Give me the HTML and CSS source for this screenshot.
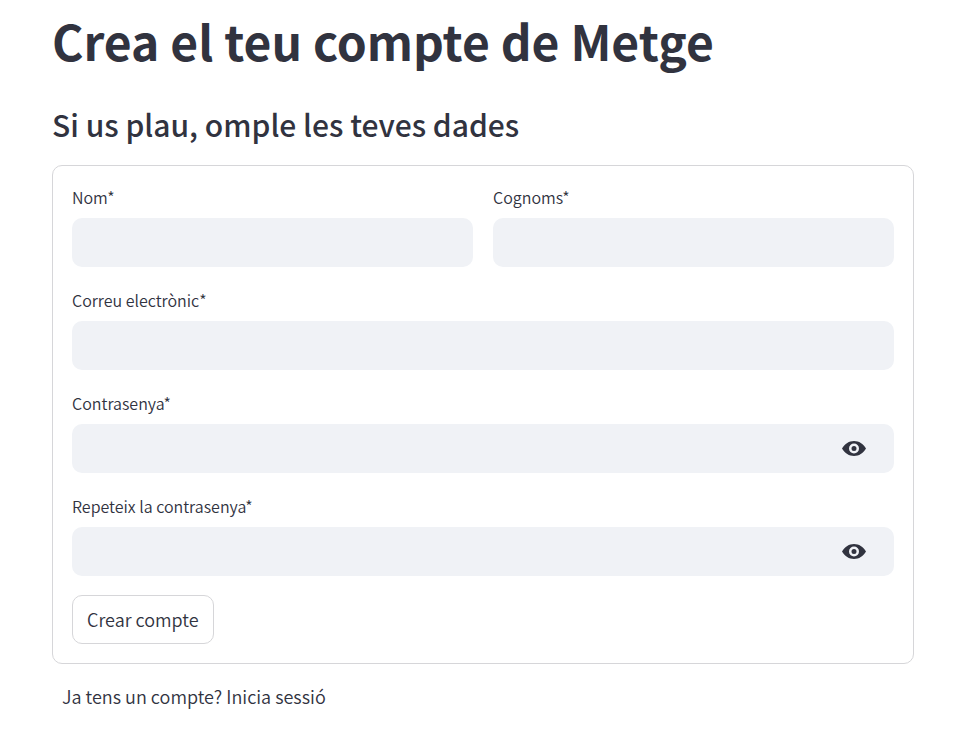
FILE: index.html
```html
<!DOCTYPE html>
<html lang="ca">
<head>
<meta charset="utf-8">
<meta name="viewport" content="width=device-width, initial-scale=1">
<title>Crea el teu compte de Metge</title>
<link rel="stylesheet" href="styles.css">
</head>
<body>
<main class="page">
  <h1 class="title">Crea el teu compte de Metge</h1>
  <h2 class="subtitle">Si us plau, omple les teves dades</h2>
  <form class="card">
    <div class="row">
      <div class="field">
        <label class="label" for="nom">Nom*</label>
        <div class="box"><input class="input" id="nom" type="text"></div>
      </div>
      <div class="field">
        <label class="label" for="cognoms">Cognoms*</label>
        <div class="box"><input class="input" id="cognoms" type="text"></div>
      </div>
    </div>
    <div class="field">
      <label class="label" for="correu">Correu electrònic*</label>
      <div class="box"><input class="input" id="correu" type="email"></div>
    </div>
    <div class="field">
      <label class="label" for="contrasenya">Contrasenya*</label>
      <div class="box">
        <input class="input" id="contrasenya" type="password">
        <button class="reveal" type="button" aria-label="Mostra la contrasenya">
          <svg class="eye" viewBox="0 0 24 15" aria-hidden="true"><path fill-rule="evenodd" d="M0 7.500C3 2.700 7 0 12 0s9 2.700 12 7.500C21 12.300 17 15 12 15S3 12.300 0 7.500zM12 2.500a5 5 0 1 0 0 10 5 5 0 0 0 0-10zM12 5a2.500 2.500 0 1 1 0 5 2.500 2.500 0 0 1 0-5z"/></svg>
        </button>
      </div>
    </div>
    <div class="field">
      <label class="label" for="repeteix">Repeteix la contrasenya*</label>
      <div class="box">
        <input class="input" id="repeteix" type="password">
        <button class="reveal" type="button" aria-label="Mostra la contrasenya">
          <svg class="eye" viewBox="0 0 24 15" aria-hidden="true"><path fill-rule="evenodd" d="M0 7.500C3 2.700 7 0 12 0s9 2.700 12 7.500C21 12.300 17 15 12 15S3 12.300 0 7.500zM12 2.500a5 5 0 1 0 0 10 5 5 0 0 0 0-10zM12 5a2.500 2.500 0 1 1 0 5 2.500 2.500 0 0 1 0-5z"/></svg>
        </button>
      </div>
    </div>
    <button class="submit" type="submit">Crear compte</button>
  </form>
  <a class="login" href="#">Ja tens un compte? Inicia sessió</a>
</main>
</body>
</html>
```
FILE: styles.css
```css
* {
  box-sizing: border-box;
}

body {
  margin: 0;
  background: #fff;
  color: #31333f;
  font-family: "Noto Sans CJK JP", "Noto Sans", sans-serif;
  font-size: 18px;
  font-weight: 350;
  line-height: 28px;
}

.page {
  padding: 8px 47px 20px 52px;
}

.title {
  margin: 0;
  font-size: 48px;
  font-weight: 700;
  line-height: 64px;
}

.subtitle {
  margin: 30px 0 19px;
  font-size: 30px;
  font-weight: 500;
  line-height: 44px;
}

.card {
  display: flex;
  flex-direction: column;
  gap: 19px;
  padding: 17px 19px 19px;
  border: 1px solid #d6d6d9;
  border-radius: 10px;
}

.row {
  display: grid;
  grid-template-columns: 1fr 1fr;
  gap: 20px;
}

.label {
  display: block;
  margin-bottom: 7px;
  font-size: 16px;
  line-height: 28px;
}

.box {
  display: flex;
  height: 49px;
  background: #f0f2f6;
  border-radius: 10px;
}

.input {
  flex: 1;
  min-width: 0;
  padding: 0 16px;
  border: 0;
  background: transparent;
  color: inherit;
  font: inherit;
  outline: 0;
}

.reveal {
  display: flex;
  align-items: center;
  padding: 0 28px 0 15px;
  border: 0;
  background: transparent;
  color: inherit;
}

.eye {
  width: 24px;
  height: 15px;
  fill: currentColor;
}

.submit {
  align-self: flex-start;
  height: 49px;
  padding: 0 14px 2px;
  border: 1px solid #d6d6d9;
  border-radius: 10px;
  background: #fff;
  color: inherit;
  font: inherit;
}

.login {
  display: inline-block;
  margin: 18px 0 0 10px;
  color: inherit;
  text-decoration: none;
}
```
